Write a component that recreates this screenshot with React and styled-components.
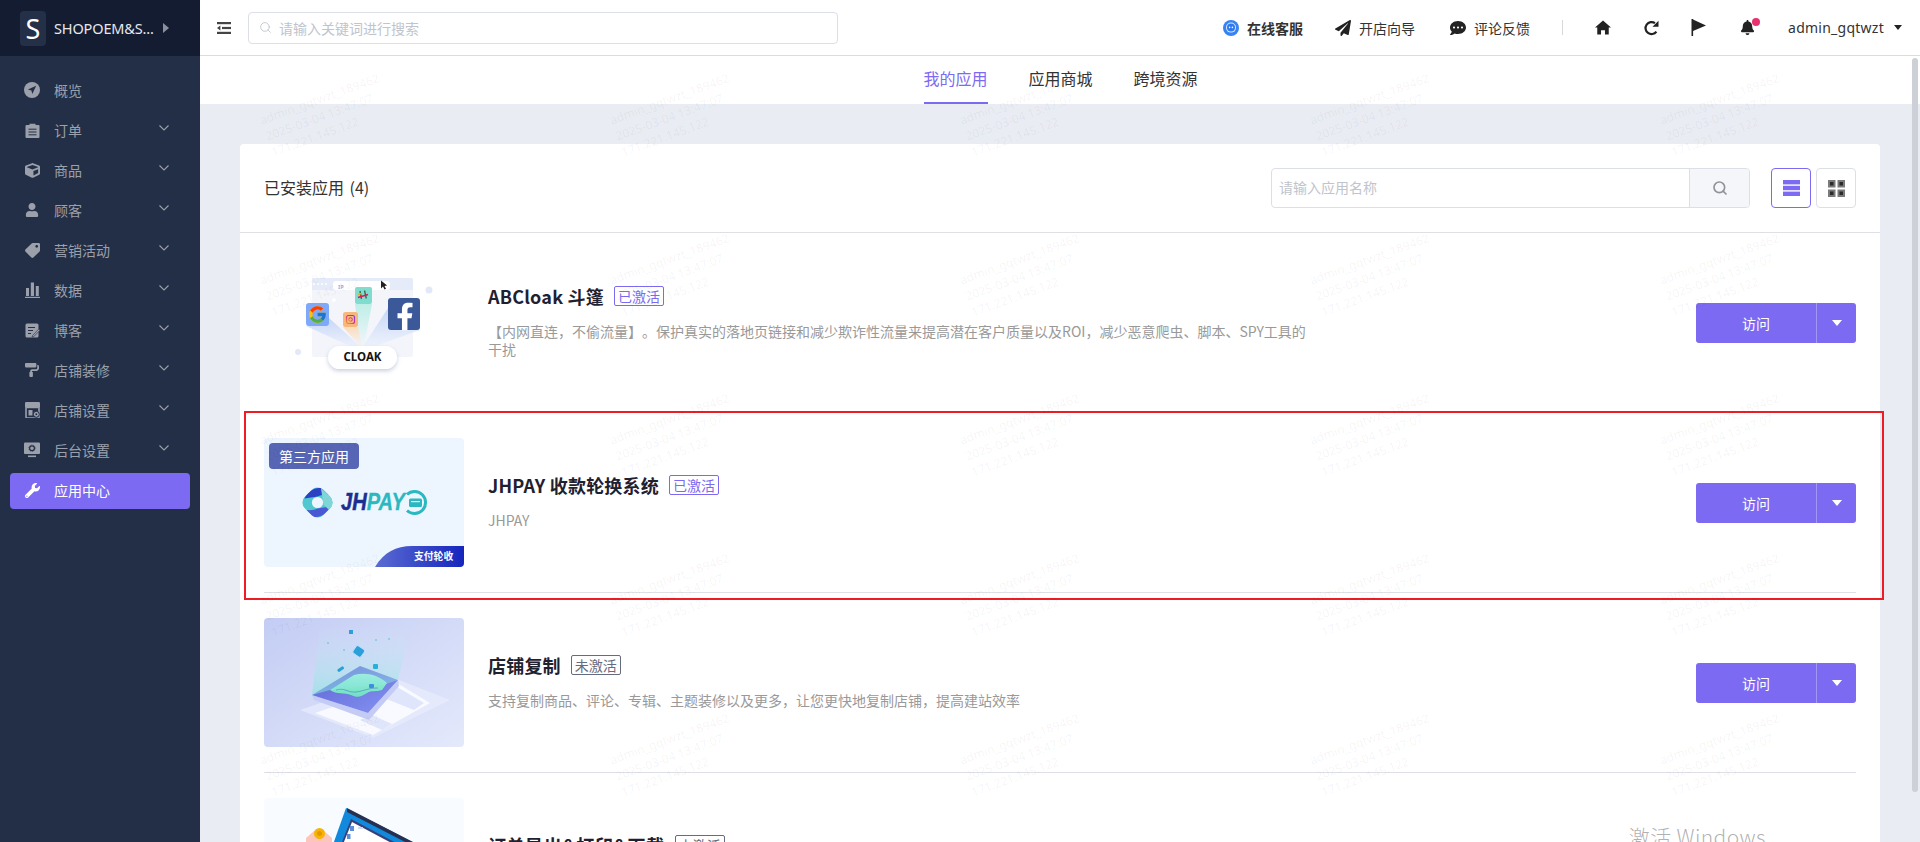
import React from "react";
import styled, { createGlobalStyle } from "styled-components";
import { Search } from "lucide-react";
import {
  FaTag, FaUser, FaCube, FaPaintRoller, FaWrench, FaPaperPlane, FaCommentDots, FaBell, FaFacebookF,
} from "react-icons/fa";
import { FcGoogle } from "react-icons/fc";

const SANS = `"Noto Sans CJK SC", "Noto Sans", sans-serif`;
const PURPLE = "#7c6bf2";

const Global = createGlobalStyle`
  html, body { margin: 0; padding: 0; height: 100%; overflow: hidden; background: #e9ecf2; }
  #root { height: 100%; }
  * { box-sizing: border-box; }
  body { font-family: ${SANS}; font-size: 14px; color: #333; text-spacing-trim: space-all; }
`;

const Shell = styled.div`display: flex; height: 842px; width: 1920px; overflow: hidden;`;

/* ---------- sidebar ---------- */
const Sidebar = styled.aside`width: 200px; flex: none; background: #232f47; display: flex; flex-direction: column;`;
const Brand = styled.div`height: 56px; background: #141c32; display: flex; align-items: center; padding-left: 20px;`;
const BrandMark = styled.div`
  width: 26px; height: 35px; border-radius: 4px; background: #242f48; color: #fff;
  display: flex; align-items: center; justify-content: center;
  font: 400 27px/35px "Noto Sans", sans-serif;
`;
const BrandName = styled.div`margin-left: 8px; width: 106px; color: #e6e8ee; font: 400 14.5px/20px "Noto Sans", sans-serif; white-space: nowrap; letter-spacing: -0.15px;`;
const BrandCaret = styled.span`
  margin-left: 3px; width: 0; height: 0; border-left: 6px solid #8a8f9c;
  border-top: 5px solid transparent; border-bottom: 5px solid transparent;
`;
const Menu = styled.nav`padding-top: 15px; display: flex; flex-direction: column;`;
const MenuItem = styled.a`
  height: 36px; margin: 2px 10px; padding: 0 21px 2px 14px; display: flex; align-items: center;
  border-radius: 4px; font-size: 14px; line-height: 20px;
  color: ${(p) => (p.$active ? "#ffffff" : "#9ba0ab")};
  background: ${(p) => (p.$active ? PURPLE : "transparent")};
`;
const MenuIcon = styled.span`width: 16px; height: 16px; margin-right: 14px; display: flex; align-items: center; justify-content: center; svg { display: block; }`;
const Chevron = styled.svg`margin-left: auto; margin-bottom: 4px; width: 10px; height: 6px; fill: none; stroke: #9ba0ab; stroke-width: 1.1;`;

const Compass = () => (
  <svg width="16" height="16" viewBox="0 0 16 16"><circle cx="8" cy="8" r="8" fill="currentColor" /><path d="M12.2 3.8 3.9 7.6l3.5.9.9 3.6z" fill="#232f47" /></svg>
);
const Clip = () => (
  <svg width="15" height="15" viewBox="0 0 15 15"><path d="M1.5 2h3V.8h6V2h3a1 1 0 0 1 1 1v11a1 1 0 0 1-1 1h-12a1 1 0 0 1-1-1V3a1 1 0 0 1 1-1z" fill="currentColor" /><path d="M3.5 6.2h8M3.5 9h8M3.5 11.8h8" stroke="#232f47" strokeWidth="1" /></svg>
);
const Bars = () => (
  <svg width="15" height="16" viewBox="0 0 15 16" fill="currentColor"><rect x="1" y="6" width="3" height="8" /><rect x="5.8" y="0.5" width="3.2" height="13.5" /><rect x="10.8" y="4" width="3" height="10" /><rect y="14.8" width="15" height="1.2" /></svg>
);
const Blog = () => (
  <svg width="15" height="15" viewBox="0 0 15 15"><rect x="0.5" y="0.5" width="13" height="14" rx="1.5" fill="currentColor" /><path d="M3 4.5h7M3 7.5h5M3 10.5h3" stroke="#232f47" strokeWidth="1.2" /><path d="M7.5 12.5 13.8 6l1.2 1.2-6.3 6.5-1.6.3z" fill="currentColor" stroke="#232f47" strokeWidth=".6" /></svg>
);
const StoreGear = () => (
  <svg width="15" height="16" viewBox="0 0 15 16"><path d="M1.5 0h12A1.3 1.3 0 0 1 15 1.3V5H0V1.3A1.3 1.3 0 0 1 1.5 0z" fill="currentColor" /><path d="M1 5.5h13V15a1 1 0 0 1-1 1H2a1 1 0 0 1-1-1z" fill="none" stroke="currentColor" strokeWidth="1.6" /><rect x="3.5" y="8" width="4" height="5.5" fill="currentColor" /><circle cx="11.3" cy="12.3" r="3" fill="currentColor" stroke="#232f47" strokeWidth="1" /><circle cx="11.3" cy="12.3" r="1" fill="#232f47" /></svg>
);
const MonitorGear = () => (
  <svg width="16" height="16" viewBox="0 0 16 16"><rect y="0.5" width="16" height="11.5" rx="1" fill="currentColor" /><rect x="4" y="13.5" width="8" height="1.6" fill="currentColor" /><circle cx="8" cy="6.2" r="2.4" fill="none" stroke="#232f47" strokeWidth="1.2" /><circle cx="8" cy="6.2" r="3.2" fill="none" stroke="#232f47" strokeWidth=".7" strokeDasharray="1 1" /></svg>
);

const menu = [
  ["概览", <Compass />, false],
  ["订单", <Clip />, true],
  ["商品", <FaCube size={15} />, true],
  ["顾客", <FaUser size={14} />, true],
  ["营销活动", <FaTag size={15} style={{ transform: "scaleX(-1)" }} />, true],
  ["数据", <Bars />, true],
  ["博客", <Blog />, true],
  ["店铺装修", <FaPaintRoller size={14} />, true],
  ["店铺设置", <StoreGear />, true],
  ["后台设置", <MonitorGear />, true],
];

/* ---------- top bar ---------- */
const Main = styled.div`flex: 1; min-width: 0; display: flex; flex-direction: column;`;
const TopBar = styled.header`height: 56px; flex: none; background: #fff; border-bottom: 1px solid #dcdcdc; display: flex; align-items: center; padding: 0 18px 0 17px;`;
const GlobalSearch = styled.div`
  margin-left: 17px; width: 590px; height: 32px; border: 1px solid #dcdfe6; border-radius: 4px;
  display: flex; align-items: center; padding-left: 10px; color: #c0c4cc; gap: 7px; line-height: 20px;
`;
const NavRight = styled.div`margin-left: auto; display: flex; align-items: center; color: #222;`;
const NavLink = styled.div`display: flex; align-items: center; gap: 8px; margin-right: ${(p) => p.$after}px; line-height: 20px; font-weight: ${(p) => (p.$strong ? 700 : 400)}; color: #333; svg { display: block; }`;
const NavDivider = styled.div`width: 1px; height: 15px; background: #d8d8d8; margin-right: 32px;`;
const NavIcon = styled.div`position: relative; width: 16px; height: 17px; margin-right: ${(p) => p.$after}px; display: flex; align-items: center; justify-content: center; color: #222; svg { display: block; }`;
const RedDot = styled.span`position: absolute; top: -1px; right: -5px; width: 8px; height: 8px; border-radius: 50%; background: #e8316e;`;
const UserName = styled.div`font: 400 14px/20px "Noto Sans", sans-serif; color: #333; letter-spacing: 0.25px;`;
const UserCaret = styled.span`margin-left: 10px; width: 0; height: 0; border-top: 5px solid #222; border-left: 4px solid transparent; border-right: 4px solid transparent;`;

const Hamburger = () => (
  <svg width="14" height="12" viewBox="0 0 14 12" fill="#444"><rect width="14" height="2.2" /><rect x="5" y="4.9" width="9" height="2.2" /><path d="M0 6l3.4-2.4v4.8z" /><rect y="9.8" width="14" height="2.2" /></svg>
);
const Service = () => (
  <svg width="16" height="16" viewBox="0 0 16 16"><circle cx="8" cy="8" r="8" fill="#3583f5" /><circle cx="8" cy="7.6" r="5" fill="#dbe8fd" /><circle cx="8" cy="7.6" r="4" fill="#2f78ee" /><circle cx="6.6" cy="7.4" r=".8" fill="#fff" /><circle cx="9.4" cy="7.4" r=".8" fill="#fff" /></svg>
);
const House = () => (
  <svg width="17" height="15" viewBox="0 0 17 15" fill="#222"><path d="M8.5 0 17 7.6h-2.4V15h-4v-4.6H6.4V15h-4V7.6H0z" /></svg>
);
const Refresh = () => (
  <svg width="15" height="16" viewBox="0 0 15 16" fill="none"><path d="M12.4 11.6A6 6 0 1 1 11 3.2" stroke="#222" strokeWidth="2.2" /><path d="M14.5 0.8v6h-6z" fill="#222" /></svg>
);
const Flag = () => (
  <svg width="15" height="17" viewBox="0 0 15 17" fill="#222"><rect x="0.5" width="1.6" height="17" /><path d="M2 .5 15 6.5 2 12z" /></svg>
);

/* ---------- body ---------- */
const Body = styled.div`position: relative; flex: 1; min-height: 0; overflow: hidden; display: flex; flex-direction: column;`;
const Tabs = styled.div`height: 48px; flex: none; background: #fff; display: flex; justify-content: center; gap: 41px; padding-left: 1px;`;
const Tab = styled.a`
  width: 64px; height: 48px; font-size: 16px; line-height: 45px; text-align: center; white-space: nowrap;
  color: ${(p) => (p.$active ? PURPLE : "#333")};
  border-bottom: 2px solid ${(p) => (p.$active ? PURPLE : "transparent")};
`;
const Content = styled.main`flex: 1; min-height: 0; overflow: hidden; padding: 40px 40px 0;`;
const Card = styled.section`background: #fff; border-radius: 4px 4px 0 0;`;
const CardHead = styled.div`height: 89px; padding: 0 24px; border-bottom: 1px solid #dfdfe6; display: flex; align-items: center;`;
const CardTitle = styled.h2`margin: 0 0 2px; font-size: 16px; font-weight: 400; line-height: 24px; color: #333; word-spacing: 2px;`;
const SearchBox = styled.div`margin-left: auto; width: 479px; height: 40px; display: flex; border: 1px solid #dcdfe6; border-radius: 4px; overflow: hidden;`;
const SearchField = styled.div`flex: 1; padding-left: 7px; color: #c0c4cc; line-height: 37px;`;
const SearchBtn = styled.div`width: 60px; background: #f5f6fa; border-left: 1px solid #dcdfe6; color: #909399; display: flex; align-items: center; justify-content: center;`;
const ViewBtn = styled.div`
  width: 40px; height: 40px; border-radius: 4px; display: flex; align-items: center; justify-content: center;
  border: 1px solid ${(p) => (p.$active ? PURPLE : "#dcdfe6")};
  margin-left: ${(p) => (p.$active ? "21px" : "5px")};
`;

const ListBody = styled.div`padding: 0 24px;`;
const Row = styled.article`position: relative; height: 180px; padding: 25px 0; border-bottom: 1px solid #dfdfe6; display: flex; align-items: center;`;
const Annotation = styled.div`position: absolute; top: -2px; bottom: -8px; left: -20px; right: -28px; border: 2px solid #ee1c25; pointer-events: none;`;
const Thumb = styled.div`position: relative; flex: none; width: 200px; height: 129px; border-radius: 4px; overflow: hidden; margin-right: 24px; svg { display: block; }`;
const ThirdParty = styled.span`position: absolute; top: 5px; left: 5px; width: 90px; height: 26px; border-radius: 4px; background: #5766b4; color: #fff; font-size: 14px; line-height: 26px; text-align: center;`;
const Info = styled.div`flex: 1; min-width: 0; padding-bottom: 4px;`;
const TitleLine = styled.div`display: flex; align-items: center; height: 24px; margin-bottom: 14px;`;
const AppName = styled.h3`margin: 0; font-size: 18px; font-weight: 700; line-height: 24px; color: #1f2130; letter-spacing: ${(p) => p.$track || 0.2}px;`;
const Tag = styled.span`
  margin-left: 10px; height: 20px; padding: 0 3px; border-radius: 2px; font-size: 14px; line-height: 18px;
  color: ${(p) => (p.$on ? PURPLE : "#666c80")}; border: 1px solid ${(p) => (p.$on ? PURPLE : "#666c80")};
`;
const Desc = styled.p`margin: 0; max-width: 824px; font-size: 14px; line-height: 18px; color: #999;`;
const SplitBtn = styled.div`flex: none; width: 160px; height: 40px; margin-left: 24px; border-radius: 3px; background: ${PURPLE}; color: #fff; display: flex;`;
const SplitMain = styled.div`width: 121px; border-right: 1px solid rgba(255,255,255,.3); text-align: center; line-height: 40px;`;
const SplitCaret = styled.div`flex: 1; display: flex; align-items: center; justify-content: center; &::after { content: ""; border-top: 6px solid #fff; border-left: 5px solid transparent; border-right: 5px solid transparent; }`;

/* ---------- overlays ---------- */
const Watermarks = styled.div`position: absolute; inset: 0; padding: 56px 0 0 60px; display: grid; grid-template-columns: repeat(5, 350px); grid-auto-rows: 160px; overflow: hidden; pointer-events: none;`;
const Mark = styled.div`font-size: 12px; line-height: 17px; height: 51px; white-space: nowrap; color: rgba(0,0,0,.05); transform: rotate(-20deg); transform-origin: 0 8px; font-family: "Noto Sans", sans-serif;`;
const ScrollThumb = styled.div`position: absolute; top: 2px; right: 2px; width: 6px; height: 734px; border-radius: 3px; background: #cdd0d6;`;
const Activate = styled.div`position: absolute; right: 154px; bottom: -9px; font: 300 21px/30px ${SANS}; color: rgba(110,110,110,.55); letter-spacing: .4px; pointer-events: none;`;

/* ---------- illustrations ---------- */
const CloakArt = () => (
  <svg width="200" height="129" viewBox="0 0 200 129">
    <defs>
      <linearGradient id="bB" x1="0" y1="0" x2="0" y2="1"><stop offset="0" stopColor="#b9cdf7" /><stop offset="1" stopColor="#eef2fc" /></linearGradient>
      <linearGradient id="bT" x1="0" y1="0" x2="0" y2="1"><stop offset="0" stopColor="#bfeee6" /><stop offset="1" stopColor="#f1f6fb" /></linearGradient>
      <linearGradient id="bO" x1="0" y1="0" x2="0" y2="1"><stop offset="0" stopColor="#fbdcbf" /><stop offset="1" stopColor="#f3f4fa" /></linearGradient>
      <linearGradient id="ig" x1="0" y1="1" x2="1" y2="0"><stop offset="0" stopColor="#f0a030" /><stop offset=".5" stopColor="#e0308a" /><stop offset="1" stopColor="#7a40d8" /></linearGradient>
      <filter id="sh" x="-20%" y="-30%" width="140%" height="170%"><feDropShadow dx="0" dy="2" stdDeviation="2" floodColor="#8a94b8" floodOpacity=".45" /></filter>
    </defs>
    <rect width="200" height="129" fill="#fff" />
    <rect x="48" y="20" width="101" height="79" rx="2" fill="#f3f5fb" />
    <path d="M48 22a2 2 0 0 1 2-2h97a2 2 0 0 1 2 2v10H48z" fill="#e6ebfa" />
    <circle cx="50" cy="26" r="1" fill="#fff" /><circle cx="54" cy="26" r="1" fill="#fff" /><circle cx="58" cy="26" r="1" fill="#fff" /><circle cx="62" cy="26" r="1" fill="#fff" />
    <rect x="69" y="23" width="57" height="9" rx="3" fill="#fff" />
    <text x="74" y="30.5" fontSize="5.5" fill="#8fb0f2" fontFamily="Noto Sans" fontWeight="700">IP</text>
    <path d="M117 22.5l0 8 2-2 1.5 3 1.5-.8-1.5-2.8 2.6-.3z" fill="#222" />
    <circle cx="165" cy="32" r="3.5" fill="#e2e8f8" /><circle cx="34" cy="94" r="3" fill="#e2e8f8" /><circle cx="70" cy="42" r="1.8" fill="#fff" />
    <polygon points="42,68 65,60 98,90 90,90" fill="url(#bB)" opacity=".75" />
    <polygon points="124,50 156,72 106,90 98,90" fill="url(#bB)" opacity=".75" />
    <polygon points="91,46 108,46 100,88 96,88" fill="url(#bT)" />
    <polygon points="79,69 94,69 98,88 96,88" fill="url(#bO)" />
    <rect x="42" y="45" width="23" height="23" rx="3" fill="#7ea9f8" />
    <FcGoogle x="43.5" y="46.5" size="20" />
    <rect x="79" y="54" width="15" height="15" rx="2.5" fill="#f8b77c" />
    <rect x="82.5" y="57.5" width="8" height="8" rx="2" fill="none" stroke="url(#ig)" strokeWidth="1.2" />
    <circle cx="86.5" cy="61.5" r="1.8" fill="none" stroke="url(#ig)" strokeWidth="1" />
    <rect x="91" y="29" width="17" height="17" rx="2" fill="#7fdccf" />
    <path d="M96 33l1.5 8M100.5 32.5l1.8 8" stroke="#3b6b4a" strokeWidth="1.4" /><path d="M94 39.5l10-3" stroke="#d81a60" strokeWidth="1.6" /><path d="M94 36.5l3-.9" stroke="#e0b030" strokeWidth="1.6" />
    <rect x="124" y="40" width="32" height="32" rx="3" fill="#3b5998" />
    <FaFacebookF x="127" y="44.5" size="28" color="#fff" />
    <rect x="64" y="88" width="69" height="23" rx="11.5" fill="#fff" filter="url(#sh)" />
    <text x="98.5" y="103.4" fontSize="11.5" fontWeight="700" fill="#151515" textAnchor="middle" fontFamily="Noto Sans">CLOAK</text>
  </svg>
);

const JhArt = () => (
  <svg width="200" height="129" viewBox="0 0 200 129">
    <defs>
      <linearGradient id="cn" x1="0" y1="0" x2="1" y2="0"><stop offset="0" stopColor="#5b6bd2" /><stop offset="1" stopColor="#1626bd" /></linearGradient>
      <clipPath id="dia"><rect x="-13" y="-13" width="26" height="26" rx="8" transform="rotate(45)" /></clipPath>
    </defs>
    <rect width="200" height="129" fill="#edf6fe" />
    <g transform="translate(53.5 64.5)" clipPath="url(#dia)">
      <rect x="-20" y="-20" width="40" height="40" fill="#4fc9cf" />
      <path d="M-13 -4C-8 -14 4 -20 14 -7C9 -8 4 -8 0 -6C-4 -5 -9 -5 -13 -4z" fill="#2a41c6" />
      <path d="M13 4C8 14 -4 20 -14 7C-9 8 -4 8 0 6C4 5 9 5 13 4z" fill="#4a58d4" />
      <path d="M3 -17C12 -10 20 -2 12 8L6 2z" fill="#7fd6d6" />
      <circle r="5.6" fill="#edf6fe" />
    </g>
    <text x="77" y="72" fontFamily="Liberation Sans" fontWeight="700" fontStyle="italic" fontSize="23" textLength="64" lengthAdjust="spacingAndGlyphs"><tspan fill="#1b2f92" stroke="#1b2f92" strokeWidth=".5">JH</tspan><tspan fill="#2bb8c0" stroke="#2bb8c0" strokeWidth=".3">PAY</tspan></text>
    <path d="M143 56.5A11 11 0 1 1 143 72.5" fill="none" stroke="#2bb8c0" strokeWidth="3" />
    <rect x="145" y="60.5" width="13" height="8.5" rx="1.5" fill="#2bb8c0" />
    <rect x="147" y="63" width="9" height="1.2" fill="#edf6fe" />
    <path d="M111 129C120 114 132 108 148 108H200V129z" fill="url(#cn)" />
    <text x="150" y="122" fontSize="9.8" fontWeight="700" fill="#fff" fontFamily="Noto Sans CJK SC">支付轮收</text>
  </svg>
);

const CopyArt = () => (
  <svg width="200" height="129" viewBox="0 0 200 129">
    <defs>
      <linearGradient id="cb" x1="0" y1="0" x2="1" y2="1"><stop offset="0" stopColor="#c3cdf4" /><stop offset="1" stopColor="#e4e9fb" /></linearGradient>
      <linearGradient id="beam" x1="0" y1="1" x2="0" y2="0"><stop offset="0" stopColor="#7fe6dc" stopOpacity=".55" /><stop offset="1" stopColor="#cfeef8" stopOpacity="0" /></linearGradient>
      <linearGradient id="plate" x1="0" y1="0" x2="1" y2="1"><stop offset="0" stopColor="#5f64d4" /><stop offset="1" stopColor="#8593f2" /></linearGradient>
      <linearGradient id="gr" x1="0" y1="0" x2="0" y2="1"><stop offset="0" stopColor="#a0efd8" /><stop offset="1" stopColor="#6fe0c4" /></linearGradient>
    </defs>
    <rect width="200" height="129" fill="url(#cb)" />
    <polygon points="36,92 109,120 186,82 130,60" fill="#e8edfc" opacity=".7" />
    <polygon points="51,95 109,117 166,85 133,65 80,85" fill="#f8faff" />
    <polygon points="133,69 160,85 150,92 120,80" fill="#dfe5fa" />
    <polygon points="96,102 118,112 128,106 108,97" fill="#dfe5fa" />
    <polygon points="48,77 104,95 134,62 135,68 105,102 50,82" fill="#c4ccf6" />
    <polygon points="48,77 96,48 134,62 104,95" fill="url(#plate)" />
    <path d="M66 72 90 57c12-3 24 0 33 8l-5 7c-6 2-10 0-15 3-6 4-10 5-16 2-7-3-14 0-21-5z" fill="url(#gr)" />
    <path d="M72 72c8-3 12 3 20 2 8-1 12-4 22-4" fill="none" stroke="#4a72c8" strokeWidth="1" opacity=".55" />
    <polygon points="56,10 146,8 134,62 122,66 66,72 48,77" fill="url(#beam)" />
    <rect x="90" y="29" width="10" height="9" rx="2" transform="rotate(35 95 33)" fill="#2a9fd8" stroke="#bdf" strokeWidth="1" />
    <rect x="85" y="12" width="4" height="4" fill="#2a9fd8" /><rect x="109" y="46" width="5" height="5" rx="1" fill="#2ab0d8" /><rect x="73" y="50" width="7" height="3" rx="1" transform="rotate(-35 76 51)" fill="#2a9fd8" />
    <circle cx="64" cy="25" r=".7" fill="#20c0d8" /><circle cx="112" cy="22" r=".7" fill="#20c0d8" /><circle cx="125" cy="21" r=".7" fill="#20c0d8" /><circle cx="80" cy="32" r=".7" fill="#20c0d8" />
    <rect x="105" y="66" width="5" height="4" rx="1" fill="#3a8fe0" />
  </svg>
);

const ExportArt = () => (
  <svg width="200" height="129" viewBox="0 0 200 129">
    <rect width="200" height="129" fill="#f8fbff" />
    <polygon points="42,40 50,33 60,33 68,40 68,70 42,70" fill="#fdc6bb" />
    <circle cx="55.5" cy="35.5" r="5.5" fill="#f8b400" /><circle cx="55.5" cy="35.5" r="2.5" fill="#e09a00" />
    <polygon points="82,10 180,60 140,129 50,100" fill="#1189dd" />
    <polygon points="83,10 180,60 178,63 83,14" fill="#27304f" />
    <polygon points="87,21 170,65 135,120 60,90" fill="#3a3f7a" />
    <polygon points="88,24 167,66 133,117 62,88" fill="#fff" />
    <rect x="86" y="28" width="4" height="5" fill="#5a8fd8" /><rect x="83" y="36" width="3.5" height="5" fill="#5a8fd8" /><rect x="94" y="29" width="5" height="2" fill="#cfe0f5" />
  </svg>
);

const apps = [
  { name: "ABCloak 斗篷", on: true, art: <CloakArt />, desc: "【内网直连，不偷流量】。保护真实的落地页链接和减少欺诈性流量来提高潜在客户质量以及ROI，减少恶意爬虫、脚本、SPY工具的干扰" },
  { name: "JHPAY 收款轮换系统", on: true, art: <JhArt />, desc: "JHPAY", third: true, marked: true },
  { name: "店铺复制", on: false, art: <CopyArt />, desc: "支持复制商品、评论、专辑、主题装修以及更多，让您更快地复制店铺，提高建站效率" },
  { name: "订单导出&打印&下载", on: false, art: <ExportArt />, desc: "支持导出、打印、下载订单", track: 0.6 },
];

const ListIcon = () => (
  <svg width="17" height="16" viewBox="0 0 17 16" fill={PURPLE}><rect width="17" height="4.4" /><rect y="5.8" width="17" height="4.4" /><rect y="11.6" width="17" height="4.4" /></svg>
);
const GridIcon = () => (
  <svg width="17" height="17" viewBox="0 0 17 17">
    {[[0, 0], [9.5, 0], [0, 9.5], [9.5, 9.5]].map(([x, y]) => (
      <g key={`${x}-${y}`}>
        <rect x={x} y={y} width="7.5" height="7.5" fill="#7a7a7a" />
        <rect x={x + 2} y={y + 2} width="3.5" height="3.5" fill="#2a2a2a" />
      </g>
    ))}
  </svg>
);

export default function App() {
  return (
    <Shell>
      <Global />
      <Sidebar>
        <Brand>
          <BrandMark>S</BrandMark>
          <BrandName>SHOPOEM&amp;S...</BrandName>
          <BrandCaret />
        </Brand>
        <Menu>
          {menu.map(([label, icon, more]) => (
            <MenuItem key={label}>
              <MenuIcon>{icon}</MenuIcon>
              {label}
              {more && <Chevron viewBox="0 0 10 6"><path d="M.5.5 5 5 9.5.5" /></Chevron>}
            </MenuItem>
          ))}
          <MenuItem $active>
            <MenuIcon><FaWrench size={15} /></MenuIcon>
            应用中心
          </MenuItem>
        </Menu>
      </Sidebar>
      <Main>
        <TopBar>
          <Hamburger />
          <GlobalSearch>
            <Search size={13} strokeWidth={1.4} color="#b8bcc6" />
            请输入关键词进行搜索
          </GlobalSearch>
          <NavRight>
            <NavLink $strong $after={32}><Service />在线客服</NavLink>
            <NavLink $after={35}><FaPaperPlane size={16} color="#222" />开店向导</NavLink>
            <NavLink $after={32}><FaCommentDots size={16} color="#222" />评论反馈</NavLink>
            <NavDivider />
            <NavIcon $after={32}><House /></NavIcon>
            <NavIcon $after={31}><Refresh /></NavIcon>
            <NavIcon $after={33}><Flag /></NavIcon>
            <NavIcon $after={33}><FaBell size={15} /><RedDot /></NavIcon>
            <UserName>admin_gqtwzt</UserName>
            <UserCaret />
          </NavRight>
        </TopBar>
        <Body>
          <Tabs>
            <Tab $active>我的应用</Tab>
            <Tab>应用商城</Tab>
            <Tab>跨境资源</Tab>
          </Tabs>
          <Content>
            <Card>
              <CardHead>
                <CardTitle>已安装应用 (4)</CardTitle>
                <SearchBox>
                  <SearchField>请输入应用名称</SearchField>
                  <SearchBtn><Search size={16} strokeWidth={2.5} /></SearchBtn>
                </SearchBox>
                <ViewBtn $active><ListIcon /></ViewBtn>
                <ViewBtn><GridIcon /></ViewBtn>
              </CardHead>
              <ListBody>
                {apps.map((a) => (
                  <Row key={a.name}>
                    <Thumb>
                      {a.art}
                      {a.third && <ThirdParty>第三方应用</ThirdParty>}
                    </Thumb>
                    <Info>
                      <TitleLine>
                        <AppName $track={a.track}>{a.name}</AppName>
                        <Tag $on={a.on}>{a.on ? "已激活" : "未激活"}</Tag>
                      </TitleLine>
                      <Desc>{a.desc}</Desc>
                    </Info>
                    <SplitBtn>
                      <SplitMain>访问</SplitMain>
                      <SplitCaret />
                    </SplitBtn>
                    {a.marked && <Annotation />}
                  </Row>
                ))}
              </ListBody>
            </Card>
          </Content>
          <Watermarks>
            {Array.from({ length: 25 }, (_, i) => (
              <Mark key={i}>admin_gqtwzt_189462<br />2025-03-04 13:47:07<br />171.221.145.122</Mark>
            ))}
          </Watermarks>
          <ScrollThumb />
          <Activate>激活 Windows</Activate>
        </Body>
      </Main>
    </Shell>
  );
}
